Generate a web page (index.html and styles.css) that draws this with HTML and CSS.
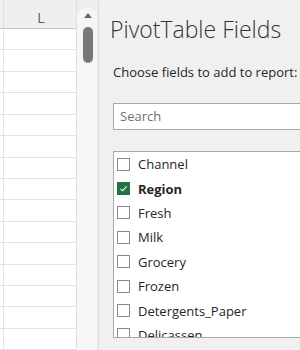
FILE: index.html
```html
<!DOCTYPE html>
<html lang="en">
<head>
    <meta charset="UTF-8">
    <meta name="viewport" content="width=device-width, initial-scale=1.0">
    <title>PivotTable Fields</title>
    <link rel="stylesheet" href="styles.css">
</head>
<body>
    <div class="app">
        <!-- Worksheet column -->
        <div class="sheet">
            <div class="col-head"><span class="col-label">L</span></div>
            <div class="row"></div>
            <div class="row"></div>
            <div class="row"></div>
            <div class="row"></div>
            <div class="row"></div>
            <div class="row"></div>
            <div class="row"></div>
            <div class="row"></div>
            <div class="row"></div>
            <div class="row"></div>
            <div class="row"></div>
            <div class="row"></div>
            <div class="row"></div>
            <div class="row"></div>
            <div class="row"></div>
        </div>

        <!-- Vertical scrollbar -->
        <div class="vscroll">
            <div class="track">
                <span class="arrow-up"></span>
                <div class="thumb"></div>
            </div>
        </div>

        <!-- Task pane -->
        <div class="pane">
            <h1 class="pane-title">PivotTable Fields</h1>
            <p class="hint">Choose fields to add to report:</p>
            <div class="search">Search</div>
            <ul class="fields">
                <li><span class="box"></span>Channel</li>
                <li class="checked"><span class="box">
                    <svg viewBox="0 0 13 13" width="13" height="13"><path d="M3.5 6.8 L5.6 8.8 L9.6 4.3" fill="none" stroke="#fff" stroke-width="1.1"/></svg>
                </span>Region</li>
                <li><span class="box"></span>Fresh</li>
                <li><span class="box"></span>Milk</li>
                <li><span class="box"></span>Grocery</li>
                <li><span class="box"></span>Frozen</li>
                <li><span class="box"></span>Detergents_Paper</li>
                <li><span class="box"></span>Delicassen</li>
            </ul>
        </div>
    </div>
</body>
</html>
```

FILE: styles.css
```css
html, body {
    margin: 0;
    padding: 0;
    background-color: #f0f0f0;
}
.app {
    display: flex;
    width: 300px;
    height: 350px;
    overflow: hidden;
    font-family: "Open Sans", "Noto Sans", sans-serif;
    color: #262626;
}
/* Worksheet */
.sheet {
    width: 76px;
    flex: none;
    border-right: 1px solid #e0e0e0;
    background-color: #fff;
    background-image: linear-gradient(to right, transparent 3px, #e4e4e4 3px, #e4e4e4 4px, transparent 4px);
}
.col-head {
    border-bottom: 1px solid #c6c6c6;
    background-color: #efefef;
    background-image: linear-gradient(to right, transparent 3px, #e0e0e0 3px, #e0e0e0 4px, transparent 4px);
    display: flex;
    justify-content: center;
    align-items: flex-end;
    box-sizing: border-box;
    height: 29px;
    padding-bottom: 2px;
}
.col-label {
    font-size: 14px;
    line-height: 16px;
    color: #5a5a5a;
    padding-left: 6px;
}
.row {
    height: 21.43px;
    box-sizing: border-box;
    border-bottom: 1px solid #e2e2e2;
}
/* Scrollbar */
.vscroll {
    width: 21px;
    flex: none;
    background-color: #eeeeee;
    padding-top: 7px;
    box-sizing: border-box;
}
.track {
    width: 20px;
    height: 360px;
    background-color: #f6f6f6;
    border-radius: 10px 10px 0 0;
    display: flex;
    flex-direction: column;
    align-items: center;
    padding-left: 2px;
    box-sizing: border-box;
}
.arrow-up {
    margin-top: 6px;
    width: 0;
    height: 0;
    border-left: 4.5px solid transparent;
    border-right: 4.5px solid transparent;
    border-bottom: 5px solid #6a6a6a;
}
.thumb {
    margin-top: 9px;
    width: 10px;
    height: 36px;
    border-radius: 5px;
    background-color: #787878;
}
/* Task pane */
.pane {
    flex: 1;
    border-left: 1px solid #dcdcdc;
    background-color: #f0f0f0;
    padding: 15px 0 0 14px;
    overflow: hidden;
}
.pane-title {
    margin: 0 0 0 -3px;
    font-size: 23px;
    font-weight: 300;
    line-height: 28px;
    color: #333;
    white-space: nowrap;
}
.hint {
    margin: 20px 0 0 0;
    font-size: 13px;
    line-height: 18px;
    white-space: nowrap;
}
.search {
    margin-top: 22px;
    width: 230px;
    height: 27px;
    box-sizing: border-box;
    border: 1px solid #a8a8a8;
    background-color: #fff;
    color: #707070;
    font-size: 13px;
    line-height: 25px;
    padding-left: 6px;
}
.fields {
    list-style: none;
    margin: 21px 0 0 0;
    padding: 0 0 0 3px;
    width: 230px;
    height: 187px;
    box-sizing: border-box;
    border: 1px solid #a8a8a8;
    background-color: #fff;
    overflow: hidden;
}
.fields li {
    height: 24.4px;
    display: flex;
    align-items: center;
    font-size: 13px;
    white-space: nowrap;
}
.box {
    width: 13px;
    height: 13px;
    box-sizing: border-box;
    border: 1px solid #8a8a8a;
    background-color: #fff;
    margin-right: 8px;
    flex: none;
}
.checked {
    font-weight: bold;
}
.checked .box {
    border-color: #217346;
    background-color: #217346;
    position: relative;
}
.checked .box svg {
    position: absolute;
    left: -1px;
    top: -1px;
}
```
